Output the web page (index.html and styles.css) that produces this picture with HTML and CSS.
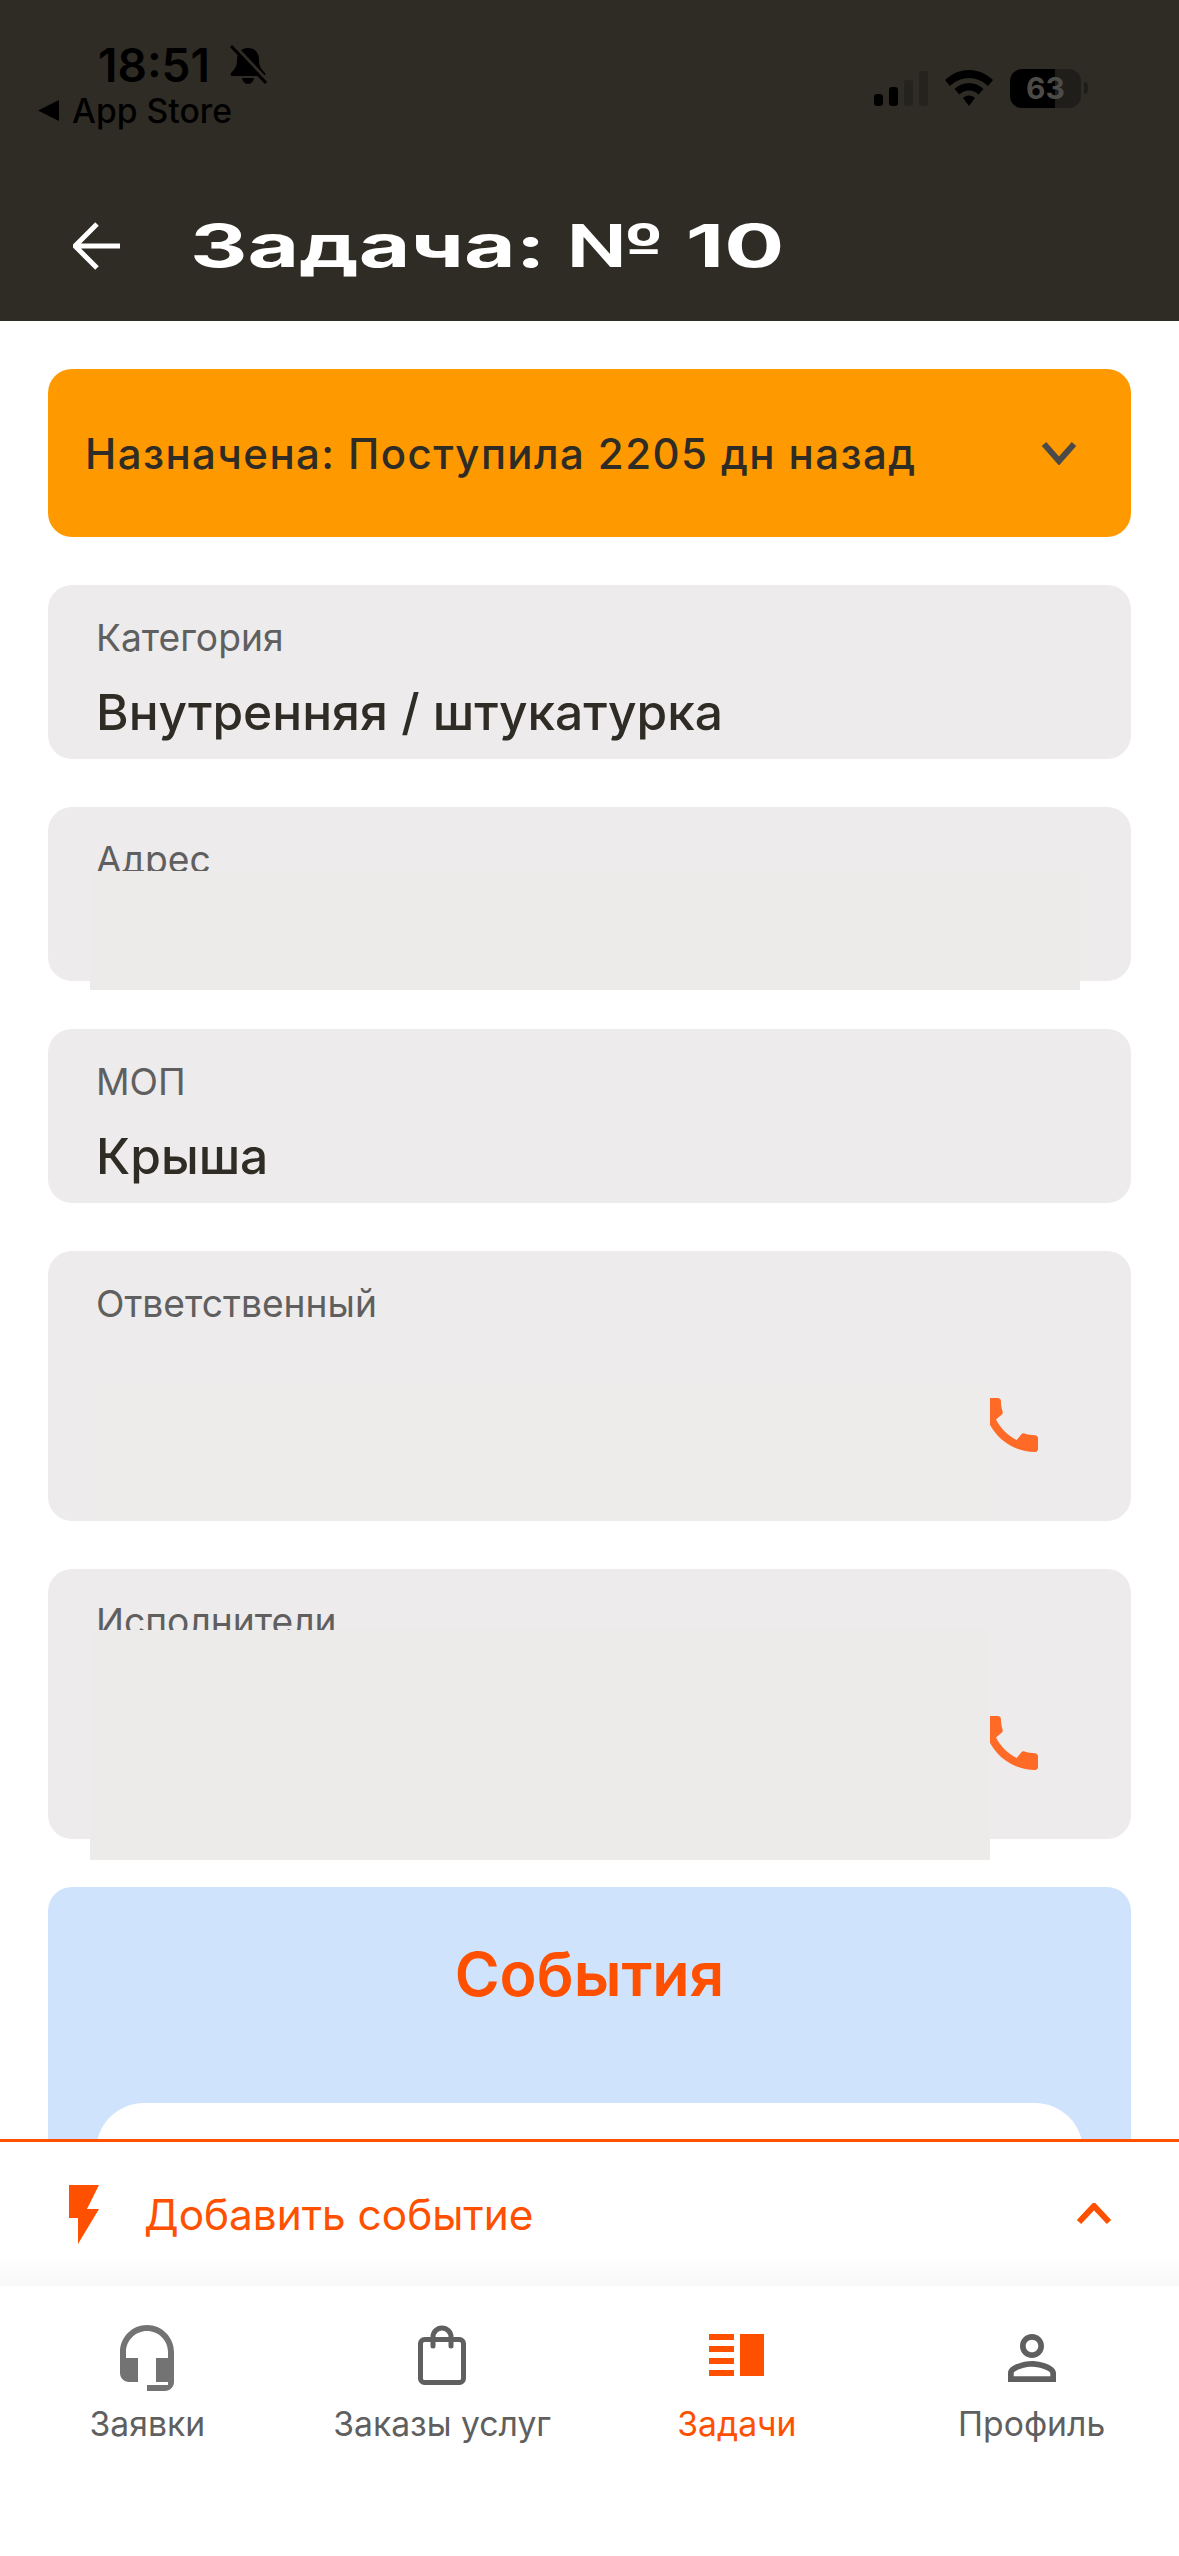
FILE: index.html
```html
<!DOCTYPE html>
<html lang="ru">
<head>
    <meta charset="UTF-8">
    <meta name="viewport" content="width=device-width, initial-scale=1.0">
    <title>Задача № 10</title>
    <link rel="stylesheet" href="styles.css">
</head>
<body>
    <div class="app">
        <header class="header">
            <div class="status">
                <div class="status-left">
                    <div class="time-row">
                        <span class="time">18:51</span>
                        <svg class="bell" width="38" height="40" viewBox="0 0 38 40">
                            <path d="M19 3c-7 0-11 5-11 12 0 6-2 9-6 13-1 2 0 3 2 3h30c2 0 3-1 2-3-4-4-6-7-6-13 0-7-4-12-11-12z"/>
                            <path d="M13 33h12c-1 4-3 6-6 6s-5-2-6-6z"/>
                            <path class="bell-gap" d="M6 1l32 34"/>
                            <path class="bell-cut" d="M2 1l35 37"/>
                        </svg>
                    </div>
                    <div class="back-app">
                        <svg width="21" height="21" viewBox="0 0 21 21"><path d="M21 0v21L0 10.500z"/></svg>
                        <span>App Store</span>
                    </div>
                </div>
                <div class="status-right">
                    <div class="signal">
                        <span class="bar bar-1"></span>
                        <span class="bar bar-2"></span>
                        <span class="bar bar-3"></span>
                        <span class="bar bar-4"></span>
                    </div>
                    <svg class="wifi" width="48" height="36" viewBox="0 0 48 36">
                        <path d="M24 0c9 0 17 3.500 24 10l-5 6c-5-5-12-8-19-8S10 11 5 16l-5-6C7 3.500 15 0 24 0z"/>
                        <path d="M24 13c5.500 0 10.500 2 14.500 6l-5 5.500c-2.500-2.500-6-4-9.500-4s-7 1.500-9.500 4l-5-5.500c4-4 9-6 14.500-6z"/>
                        <path d="M24 25.500c2.500 0 4.500 1 6 2.500l-6 8-6-8c1.500-1.500 3.500-2.500 6-2.500z"/>
                    </svg>
                    <div class="battery"><span>63</span></div>
                    <span class="battery-tip"></span>
                </div>
            </div>
            <div class="title-row">
                <svg class="back" width="48" height="48" viewBox="0 0 48 48">
                    <path d="M47 24H3M24 2L2 24l22 22"/>
                </svg>
                <h1>Задача: № 10</h1>
            </div>
        </header>

        <main class="content">
            <div class="state-card">
                <span>Назначена: Поступила 2205 дн назад</span>
                <svg width="36" height="24" viewBox="0 0 36 24"><path d="M3 3l15 17L33 3"/></svg>
            </div>

            <div class="field">
                <div class="field-label">Категория</div>
                <div class="field-value">Внутренняя / штукатурка</div>
            </div>

            <div class="field field-plain">
                <div class="field-label">Адрес</div>
                <div class="patch patch-address"></div>
            </div>

            <div class="field">
                <div class="field-label">МОП</div>
                <div class="field-value">Крыша</div>
            </div>

            <div class="field field-phone">
                <div class="field-label">Ответственный</div>
                <svg class="phone" width="72" height="72" viewBox="0 0 24 24">
                    <path d="M20.010 15.380c-1.230 0-2.420-.2-3.530-.56-.35-.12-.74-.03-1.010.24l-1.570 1.970c-2.830-1.350-5.480-3.900-6.890-6.830l1.950-1.660c.27-.28.35-.67.24-1.020-.37-1.110-.56-2.300-.56-3.530 0-.54-.45-.99-.99-.99H4.190C3.650 3 3 3.240 3 3.990 3 13.280 10.730 21 20.010 21c.71 0 .99-.63.99-1.180v-3.450c0-.54-.45-.99-.99-.99z"/>
                </svg>
                <div class="patch patch-owner"></div>
            </div>

            <div class="field field-phone">
                <div class="field-label">Исполнители</div>
                <svg class="phone" width="72" height="72" viewBox="0 0 24 24">
                    <path d="M20.010 15.380c-1.230 0-2.420-.2-3.530-.56-.35-.12-.74-.03-1.010.24l-1.570 1.970c-2.830-1.350-5.480-3.900-6.890-6.830l1.950-1.660c.27-.28.35-.67.24-1.020-.37-1.110-.56-2.300-.56-3.530 0-.54-.45-.99-.99-.99H4.190C3.650 3 3 3.240 3 3.990 3 13.280 10.730 21 20.010 21c.71 0 .99-.63.99-1.180v-3.450c0-.54-.45-.99-.99-.99z"/>
                </svg>
                <div class="patch patch-workers"></div>
            </div>

            <section class="events">
                <h2>События</h2>
                <div class="event-card"></div>
            </section>
        </main>

        <div class="add-event">
            <svg width="30" height="59" viewBox="0 0 30 59"><path d="M0 0h30L18 24h12L9 59V33H0z"/></svg>
            <span class="add-text">Добавить событие</span>
            <svg class="add-chevron" width="36" height="22" viewBox="0 0 36 22"><path d="M3 19L18 3l15 16"/></svg>
        </div>

        <nav class="tabs">
            <div class="tab">
                <svg class="icon-headset" width="72" height="72" viewBox="0 0 24 24">
                    <path d="M12 1c-4.970 0-9 4.030-9 9v7c0 1.660 1.340 3 3 3h3v-8H5v-2c0-3.870 3.130-7 7-7s7 3.130 7 7v2h-4v8h4v1h-7v2h6c1.660 0 3-1.340 3-3V10c0-4.970-4.030-9-9-9z"/>
                </svg>
                <span>Заявки</span>
            </div>
            <div class="tab">
                <svg class="icon-bag" width="72" height="72" viewBox="0 0 72 72">
                    <rect x="14.500" y="17.500" width="43" height="43" rx="4"/>
                    <path d="M27 24V15a9 9 0 0 1 18 0v9"/>
                </svg>
                <span>Заказы услуг</span>
            </div>
            <div class="tab tab-active">
                <svg class="icon-tasks" width="72" height="72" viewBox="0 0 72 72">
                    <rect x="8" y="12" width="25" height="6"/>
                    <rect x="8" y="24" width="25" height="6"/>
                    <rect x="8" y="36" width="25" height="6"/>
                    <rect x="8" y="48" width="25" height="6"/>
                    <rect x="39" y="12" width="24" height="42"/>
                </svg>
                <span>Задачи</span>
            </div>
            <div class="tab">
                <svg class="icon-profile" width="72" height="72" viewBox="0 0 24 24">
                    <path d="M12 5.900c1.160 0 2.100.94 2.100 2.100s-.94 2.100-2.100 2.100S9.900 9.160 9.900 8s.94-2.100 2.100-2.100m0 9c2.970 0 6.100 1.460 6.100 2.100v1.100H5.900V17c0-.64 3.130-2.100 6.100-2.100M12 4C9.790 4 8 5.790 8 8s1.790 4 4 4 4-1.790 4-4-1.790-4-4-4zm0 9c-2.670 0-8 1.340-8 4v3h16v-3c0-2.660-5.330-4-8-4z"/>
                </svg>
                <span>Профиль</span>
            </div>
        </nav>
    </div>
</body>
</html>
```

FILE: styles.css
```css
body {
    margin: 0;
    background-color: #fff;
    font-family: Inter, "Noto Sans", sans-serif;
    color: #2f2c26;
}
.app {
    width: 1179px;
    height: 2556px;
    display: flex;
    flex-direction: column;
    overflow: hidden;
}

/* header + status bar */
.header {
    height: 321px;
    flex: none;
    box-sizing: border-box;
    padding-top: 42px;
    background-color: #2f2c26;
}
.status {
    height: 90px;
    display: flex;
    justify-content: space-between;
    padding: 0 91px 0 38px;
    color: #000;
}
.time-row {
    display: flex;
    align-items: center;
    gap: 19px;
    height: 46px;
    padding-left: 60px;
}
.time {
    font-size: 46px;
    line-height: 46px;
    font-weight: 600;
}
.bell {
    fill: #000;
    stroke: none;
}
.bell-gap {
    fill: none;
    stroke: #2f2c26;
    stroke-width: 3;
}
.bell-cut {
    fill: none;
    stroke: #000;
    stroke-width: 3;
}
.back-app {
    display: flex;
    align-items: center;
    gap: 13px;
    height: 40px;
    margin-top: 2px;
    font-size: 33.700px;
    font-weight: 500;
}
.back-app svg {
    fill: #000;
}
.status-right {
    display: flex;
    align-items: center;
    height: 40px;
    margin-top: 26px;
}
.signal {
    display: flex;
    align-items: flex-end;
    gap: 6px;
    height: 35px;
    margin-right: 17px;
}
.bar {
    width: 9px;
    border-radius: 3px;
    background-color: #000;
}
.bar-1 { height: 12px; }
.bar-2 { height: 19px; }
.bar-3 { height: 26px; background-color: #25231e; }
.bar-4 { height: 35px; background-color: #25231e; }
.wifi {
    fill: #000;
    margin-right: 17px;
}
.battery {
    width: 71px;
    height: 39px;
    border-radius: 12px;
    background: linear-gradient(to right, #000 45px, #1f1e1a 45px);
    color: #4d4b47;
    font-size: 30px;
    font-weight: 700;
    line-height: 39px;
    text-align: center;
}
.battery-tip {
    width: 4px;
    height: 12px;
    margin-left: 3px;
    border-radius: 0 6px 6px 0;
    background-color: #1f1e1a;
}
.title-row {
    display: flex;
    align-items: center;
    gap: 69px;
    margin-top: 79px;
    padding-left: 73px;
}
.back {
    flex: none;
    fill: none;
    stroke: #fff;
    stroke-width: 5;
}
h1 {
    margin: 0;
    color: #fff;
    font-size: 59px;
    line-height: 70px;
    font-weight: 700;
    transform: scaleX(1.51);
    transform-origin: left center;
}

/* scroll area */
.content {
    flex: 1;
    min-height: 0;
    overflow: hidden;
    display: flex;
    flex-direction: column;
    gap: 48px;
    padding: 48px 48px 0;
}
.state-card {
    flex: none;
    height: 168px;
    box-sizing: border-box;
    display: flex;
    justify-content: space-between;
    align-items: center;
    padding: 0 54px 0 37px;
    border-radius: 24px;
    background-color: #ff9900;
    font-size: 42px;
    font-weight: 550;
    letter-spacing: 1.400px;
}
.state-card svg {
    fill: none;
    stroke: #4a4a48;
    stroke-width: 6;
}
.field {
    position: relative;
    flex: none;
    height: 174px;
    box-sizing: border-box;
    padding: 31px 48px 0;
    border-radius: 24px;
    background-color: #edebec;
}
.field-label {
    font-size: 37.200px;
    line-height: 44px;
    color: #5f5f5f;
}
.field-value {
    margin-top: 22px;
    font-size: 49.700px;
    line-height: 60px;
    font-weight: 500;
}
.field-phone {
    height: 270px;
}
.phone {
    position: absolute;
    right: 84px;
    bottom: 60px;
    fill: #ff6a26;
}
.patch {
    position: absolute;
    left: 42px;
}
.patch-address {
    top: 64px;
    width: 990px;
    height: 119px;
    background-color: #ecebea;
}
.patch-owner {
    top: 131px;
    width: 900px;
    height: 139px;
    background-color: #edecea;
}
.patch-workers {
    top: 61px;
    width: 900px;
    height: 230px;
    background-color: #ecebea;
}
.events {
    flex: none;
    height: 700px;
    box-sizing: border-box;
    padding: 52px 48px 0;
    border-radius: 24px 24px 0 0;
    background-color: #cfe3fd;
}
h2 {
    margin: 0;
    color: #ff5000;
    font-size: 61px;
    line-height: 70px;
    font-weight: 600;
    text-align: center;
}
.event-card {
    height: 500px;
    margin-top: 94px;
    border-radius: 48px 48px 0 0;
    background-color: #fff;
}

/* bottom panel */
.add-event {
    flex: none;
    height: 144px;
    display: flex;
    align-items: center;
    gap: 45px;
    padding: 0 67px 0 69px;
    border-top: 3px solid #ff5000;
    background: linear-gradient(to bottom, #fff 115px, #f8f8f8 144px);
    color: #ff5000;
}
.add-event svg {
    flex: none;
    fill: #ff5000;
}
.add-text {
    flex: 1;
    font-size: 42.300px;
}
.add-event .add-chevron {
    fill: none;
    stroke: #ff5000;
    stroke-width: 6;
}
.tabs {
    flex: none;
    height: 270px;
    box-sizing: border-box;
    display: grid;
    grid-template-columns: repeat(4, 1fr);
    padding-top: 36px;
    background-color: #fff;
}
.tab {
    display: flex;
    flex-direction: column;
    align-items: center;
    gap: 8px;
    font-size: 33.700px;
    line-height: 44px;
    color: #5f5f5f;
}
.tab-active {
    color: #ff5000;
}
.icon-headset {
    fill: #737373;
}
.icon-bag {
    fill: none;
    stroke: #5f5f5f;
    stroke-width: 5;
    stroke-linecap: round;
}
.icon-tasks {
    fill: #ff5000;
}
.icon-profile {
    fill: #5f5f5f;
}
```
